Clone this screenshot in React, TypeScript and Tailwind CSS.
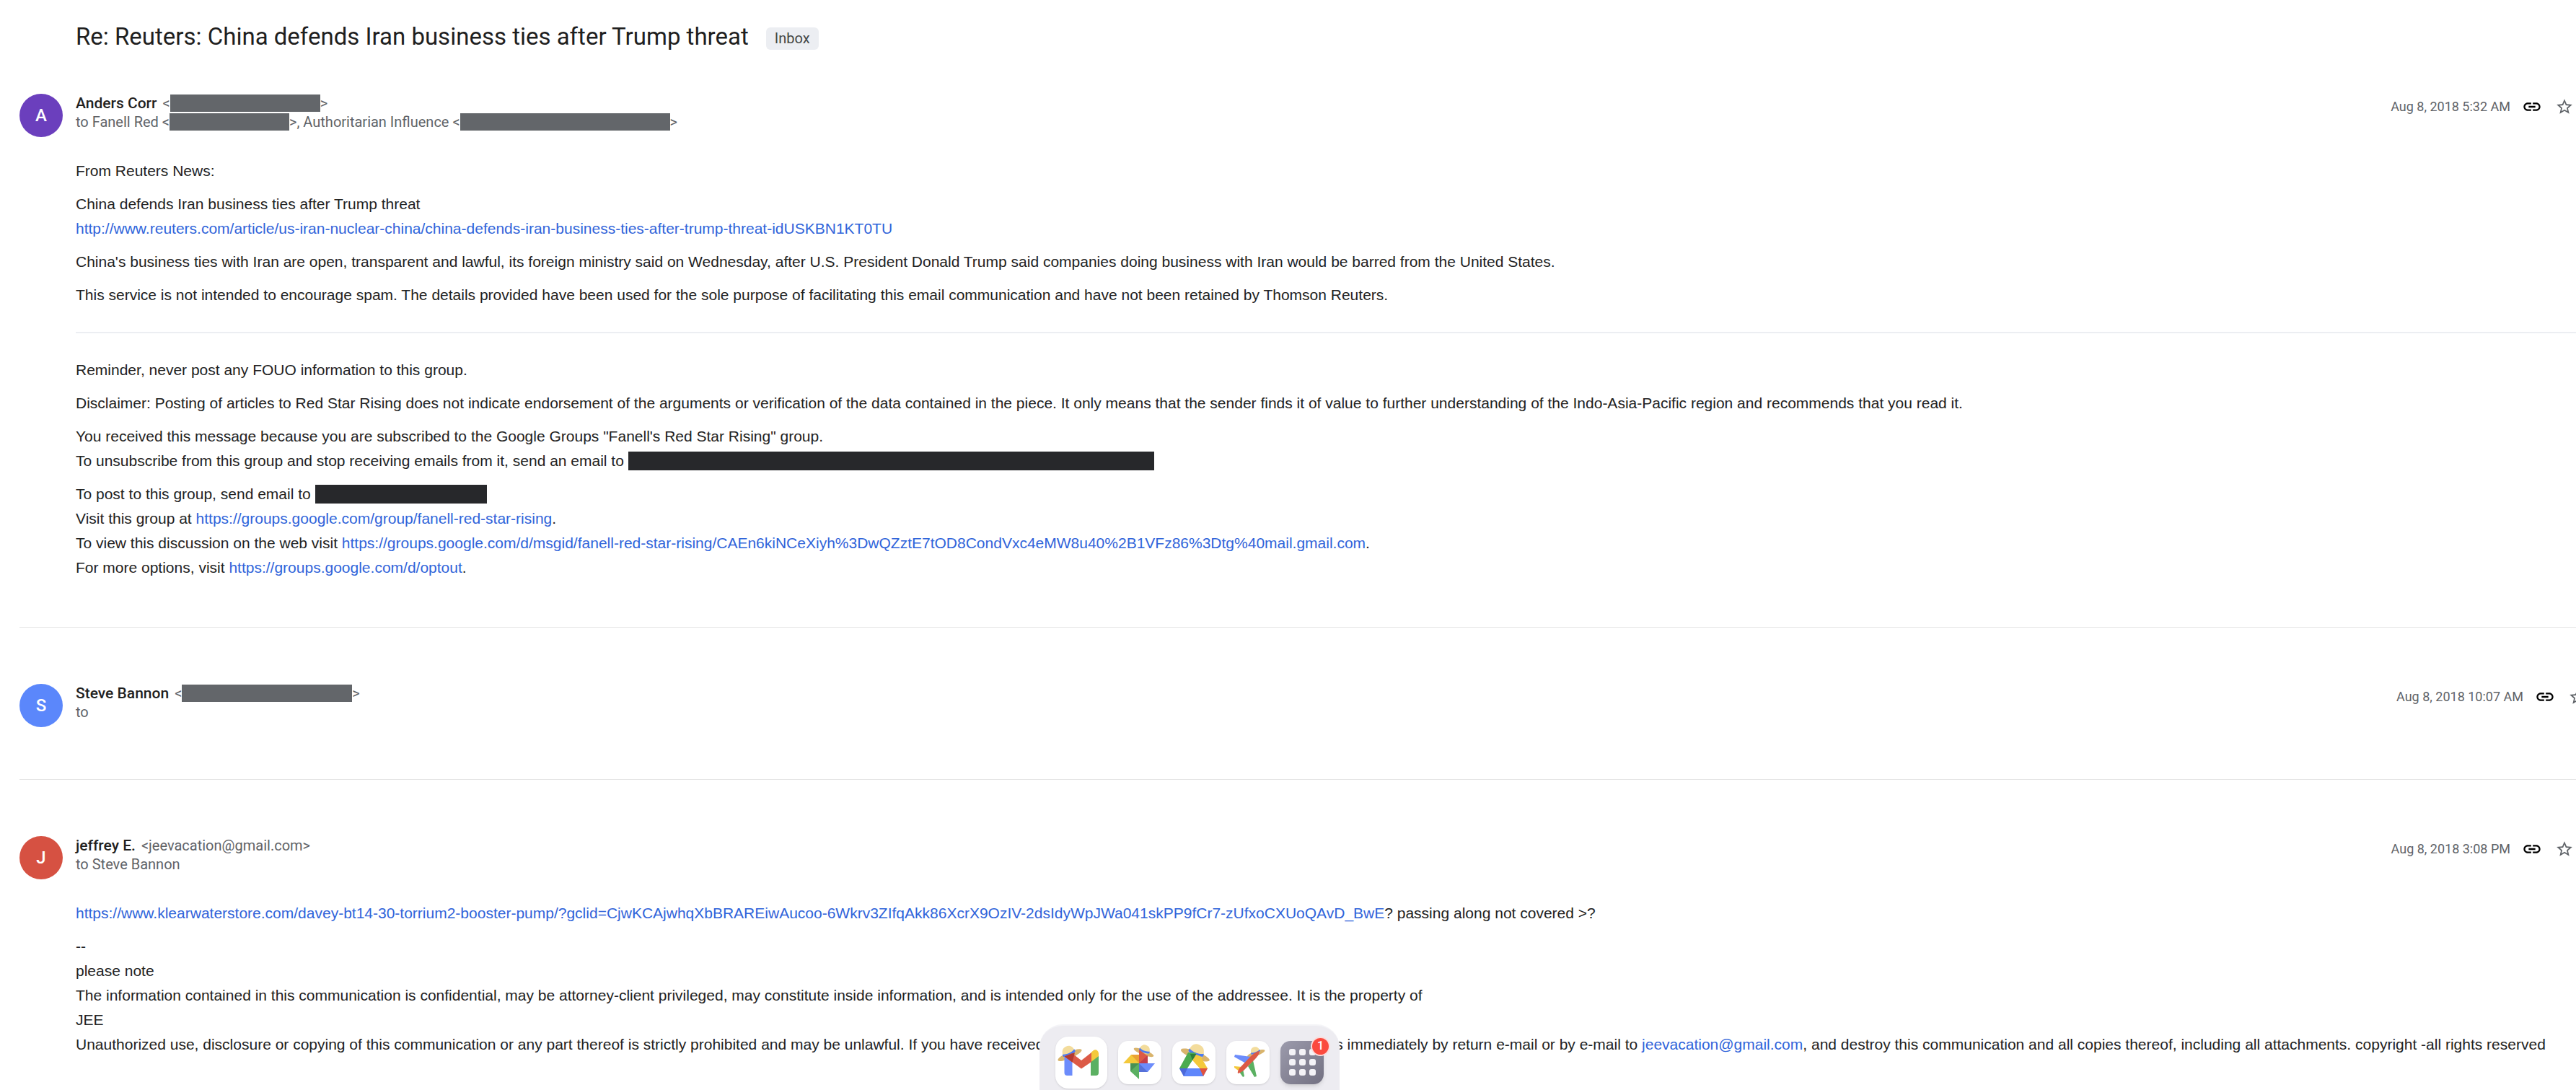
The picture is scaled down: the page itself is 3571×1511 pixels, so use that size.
import type { ReactNode } from "react";
import { MdLink, MdStarBorder } from "react-icons/md";

function Mail({ href }: { href: string }) {
  return (
    <a href={href} className="text-[#3064da]">
      {href.replace("mailto:", "")}
    </a>
  );
}

// Blacked-out address
function Redacted({ className }: { className: string }) {
  return <span className={`inline-block align-middle ${className}`} />;
}

type MessageProps = {
  initial: string;
  color: string;
  name: string;
  address: ReactNode;
  to: ReactNode;
  date: string;
  overflow?: boolean;
  children?: ReactNode;
};

function Message({ initial, color, name, address, to, date, overflow, children }: MessageProps) {
  return (
    <article className="pl-[27px]">
      <header className="flex items-start">
        <div
          className={`flex size-[60px] shrink-0 items-center justify-center rounded-full text-2xl font-medium text-white ${color}`}
        >
          {initial}
        </div>
        <div className="ml-[18px] flex-1 text-xl leading-[26px] whitespace-nowrap text-[#5f6368]">
          <div className="flex items-center">
            <h2 className="mr-2 text-[21px] leading-[26px] font-medium text-[#1f1f1f]">{name}</h2>
            <span className="flex items-center">{address}</span>
          </div>
          <div className="flex items-center">{to}</div>
        </div>
        <div className={`flex items-center text-lg text-[#5f6368] ${overflow ? "-mr-[15px]" : "mr-[3px]"}`}>
          <time className="mt-1 whitespace-nowrap">{date}</time>
          <button type="button" aria-label="Copy link" className="mt-1 ml-4 text-black">
            <MdLink className="size-7" />
          </button>
          <button type="button" aria-label="Star" className="mt-1 ml-[18px]">
            <MdStarBorder className="size-[26px]" />
          </button>
        </div>
      </header>
      {children && (
        <div className="mt-[30px] ml-[78px] flex flex-col gap-3 font-[Liberation_Sans,sans-serif] text-[21px] leading-[34px] whitespace-nowrap text-[#222]">
          {children}
        </div>
      )}
    </article>
  );
}

function Hat({ transform }: { transform: string }) {
  return (
    <g transform={transform}>
      <ellipse cx="0" cy="5" rx="18" ry="4.5" fill="#d9b46c" />
      <path d="M-9 4C-9-5-5-8 0-8S9-5 9 4C4 7-4 7-9 4Z" fill="#f3dc9c" />
      <path d="M-9 0C-4 3 4 3 9 0L9.300 3.500C4 6-4 6-9.300 3.500Z" fill="#4c7bf0" />
    </g>
  );
}

function GmailIcon() {
  return (
    <svg viewBox="0 0 72 72" className="size-full">
      <Hat transform="translate(18 21) rotate(-24)" />
      <path d="M12.500 26L23.500 34V54H16.500Q12.500 54 12.500 50Z" fill="#6c8cfb" />
      <path d="M49 34L60 26V50Q60 54 56 54H49Z" fill="#5bb062" />
      <path d="M49 23C54 15 60 18 60 24V27L49 35.500Z" fill="#f4c93b" />
      <path d="M23 23L36 33L50 22V35L36 44.500L12.500 27.500Z" fill="#dc5a46" />
      <path d="M12.500 27.500L27 22L23.500 35.500Z" fill="#b23b30" />
    </svg>
  );
}

function PhotosIcon() {
  return (
    <svg viewBox="0 0 60 60" className="size-full">
      <Hat transform="translate(37 12) rotate(21) scale(.82)" />
      <path d="M29 31V19H18L7 31Z" fill="#f4c93b" />
      <path d="M29 31L18 19H29Z" fill="#eaa233" />
      <path d="M29 31V12L41 21V31Z" fill="#dc5a46" />
      <path d="M29 31L41 20V31Z" fill="#c23f4c" />
      <path d="M29 31H51L41 43H29Z" fill="#6c8cfb" />
      <path d="M29 31L41 43H29Z" fill="#5570d8" />
      <path d="M29 31V53L17 42V31Z" fill="#5bb062" />
      <path d="M29 31L17 42V31Z" fill="#479155" />
    </svg>
  );
}

function DriveIcon() {
  return (
    <svg viewBox="0 0 60 60" className="size-full">
      <Hat transform="translate(34 14) rotate(21) scale(1.18)" />
      <path d="M22 16L33 16.500L28 27L21 38H10Z" fill="#4aab50" />
      <path d="M33 19L28 27L38 38H49L39 21Z" fill="#f4c93b" />
      <path d="M28 27L21.500 38H38Z" fill="#fff" />
      <path d="M10 38H49L43 49H16Z" fill="#5f86fb" />
      <path d="M10 38H21L16 49Z" fill="#4c68d8" />
      <path d="M38 38H49L43 49Z" fill="#e0523f" />
      <path d="M28 27L25 18H33.500Z" fill="#2f7f38" />
    </svg>
  );
}

function FlightsIcon() {
  return (
    <svg viewBox="0 0 60 60" className="size-full">
      <Hat transform="translate(40 14) rotate(-20) scale(.72)" />
      <path d="M12 19L34 22L27 31L11 22Z" fill="#6c8cfb" />
      <path d="M37 27L42 49L39 50L30 35Z" fill="#5bb062" />
      <path d="M11 35L22 36L18 42L11 37Z" fill="#f4c93b" />
      <path d="M23 39L25 49L23 50L18 43Z" fill="#5bb062" />
      <path d="M46 14C43 14 38 17 33 22L18 38Q15 43 16 45Q20 44 24 41L38 27C43 22 46 18 46 14Z" fill="#dc5a46" />
    </svg>
  );
}

function Dock() {
  const tile = "size-[60px] overflow-hidden rounded-[14px] bg-white shadow-sm";
  return (
    <nav
      aria-label="Apps"
      className="fixed bottom-0 left-[1441px] flex h-[91px] items-center gap-[15px] rounded-t-[32px] border-t-2 border-[#f4f4f7] bg-[#edecf1] px-[22px] pt-3"
    >
      <button type="button" aria-label="Gmail" className="size-[72px] overflow-hidden rounded-[18px] bg-white shadow-sm">
        <GmailIcon />
      </button>
      <button type="button" aria-label="Photos" className={tile}>
        <PhotosIcon />
      </button>
      <button type="button" aria-label="Drive" className={tile}>
        <DriveIcon />
      </button>
      <button type="button" aria-label="Flights" className={tile}>
        <FlightsIcon />
      </button>
      <button
        type="button"
        aria-label="All apps"
        className="relative flex size-[60px] items-center justify-center rounded-[14px] bg-linear-to-br from-[#9c9bac] to-[#737182] shadow-md"
      >
        <span className="grid grid-cols-[9px_9px_9px] gap-[5px]">
          {Array.from({ length: 9 }, (_, i) => (
            <span key={i} className="size-[9px] rounded-[3px] bg-[#f4f3f7]" />
          ))}
        </span>
        <span className="absolute -top-[6px] -right-[9px] flex size-[27px] items-center justify-center rounded-full border-2 border-[#fbdcdc] bg-[#fb4a3e] text-base leading-none font-medium text-white">
          1
        </span>
      </button>
    </nav>
  );
}

export default function App() {
  return (
    <main className="min-h-screen overflow-hidden bg-white font-[Roboto,sans-serif]">
      <div className="flex items-center gap-6 pt-[30px] pl-[105px]">
        <h1 className="text-[33px] leading-[42px] text-[#1f1f1f]">
          Re: Reuters: China defends Iran business ties after Trump threat
        </h1>
        <span className="mt-1 rounded-md bg-[#eceef2] px-3 text-xl leading-[31px] text-[#444746]">Inbox</span>
      </div>

      <div className="mt-[58px]">
        <Message
          initial="A"
          color="bg-[#6b3fbd]"
          name="Anders Corr"
          address={
            <>
              &lt;
              <Redacted className="h-6 w-[208px] bg-[#63666a]" />
              &gt;
            </>
          }
          to={
            <>
              to Fanell Red &lt;
              <Redacted className="h-6 w-[166px] bg-[#63666a]" />
              &gt;, Authoritarian Influence &lt;
              <Redacted className="h-6 w-[291px] bg-[#63666a]" />
              &gt;
            </>
          }
          date="Aug 8, 2018 5:32 AM"
        >
          <p>From Reuters News:</p>
          <p>
            China defends Iran business ties after Trump threat
            <br />
            <Mail href="http://www.reuters.com/article/us-iran-nuclear-china/china-defends-iran-business-ties-after-trump-threat-idUSKBN1KT0TU" />
          </p>
          <p>
            China's business ties with Iran are open, transparent and lawful, its foreign ministry said on Wednesday,
            after U.S. President Donald Trump said companies doing business with Iran would be barred from the United
            States.
          </p>
          <p>
            This service is not intended to encourage spam. The details provided have been used for the sole purpose of
            facilitating this email communication and have not been retained by Thomson Reuters.
          </p>
          <hr className="my-[22px] border-t-2 border-[#eceef2]" />
          <p>Reminder, never post any FOUO information to this group.</p>
          <p>
            Disclaimer: Posting of articles to Red Star Rising does not indicate endorsement of the arguments or
            verification of the data contained in the piece. It only means that the sender finds it of value to further
            understanding of the Indo-Asia-Pacific region and recommends that you read it.
          </p>
          <div>
            <p>
              You received this message because you are subscribed to the Google Groups "Fanell's Red Star Rising"
              group.
            </p>
            <p className="flex items-center gap-[6px]">
              To unsubscribe from this group and stop receiving emails from it, send an email to
              <Redacted className="h-[26px] w-[729px] bg-[#27282b]" />
            </p>
          </div>
          <div>
            <p className="flex items-center gap-[6px]">
              To post to this group, send email to
              <Redacted className="h-[26px] w-[238px] bg-[#27282b]" />
            </p>
            <p>
              Visit this group at <Mail href="https://groups.google.com/group/fanell-red-star-rising" />.
            </p>
            <p>
              To view this discussion on the web visit{" "}
              <Mail href="https://groups.google.com/d/msgid/fanell-red-star-rising/CAEn6kiNCeXiyh%3DwQZztE7tOD8CondVxc4eMW8u40%2B1VFz86%3Dtg%40mail.gmail.com" />
              .
            </p>
            <p>
              For more options, visit <Mail href="https://groups.google.com/d/optout" />.
            </p>
          </div>
        </Message>
      </div>

      <hr className="mt-[65px] ml-[27px] border-[#e4e4e4]" />

      <div className="mt-[78px]">
        <Message
          initial="S"
          color="bg-[#5b87fb]"
          name="Steve Bannon"
          address={
            <>
              &lt;
              <Redacted className="h-6 w-[236px] bg-[#63666a]" />
              &gt;
            </>
          }
          to="to"
          date="Aug 8, 2018 10:07 AM"
          overflow
        />
      </div>

      <hr className="mt-[72px] ml-[27px] border-[#e4e4e4]" />

      <div className="mt-[78px]">
        <Message
          initial="J"
          color="bg-[#d65142]"
          name="jeffrey E."
          address="<jeevacation@gmail.com>"
          to="to Steve Bannon"
          date="Aug 8, 2018 3:08 PM"
        >
          <p>
            <Mail href="https://www.klearwaterstore.com/davey-bt14-30-torrium2-booster-pump/?gclid=CjwKCAjwhqXbBRAREiwAucoo-6Wkrv3ZIfqAkk86XcrX9OzIV-2dsIdyWpJWa041skPP9fCr7-zUfxoCXUoQAvD_BwE" />
            ? passing along not covered &gt;?
          </p>
          <div>
            <p>--</p>
            <p>please note</p>
            <p>
              The information contained in this communication is confidential, may be attorney-client privileged, may
              constitute inside information, and is intended only for the use of the addressee. It is the property of
            </p>
            <p>JEE</p>
            <p>
              Unauthorized use, disclosure or copying of this communication or any part thereof is strictly prohibited
              and may be unlawful. If you have received this communication in error, please notify us immediately by
              return e-mail or by e-mail to <Mail href="mailto:jeevacation@gmail.com" />, and destroy this communication
              and all copies thereof, including all attachments. copyright -all rights reserved
            </p>
          </div>
        </Message>
      </div>
      <Dock />
    </main>
  );
}
